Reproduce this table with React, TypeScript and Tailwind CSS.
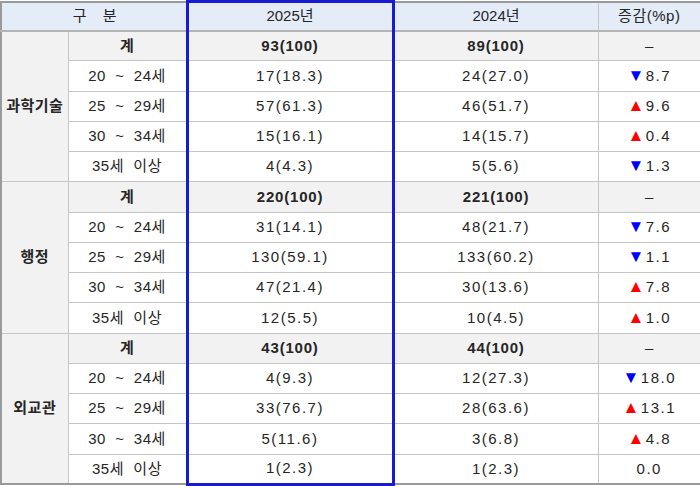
import React from "react";

type Row = { age: string; y25: string; y24: string; diff: string; dir?: "up" | "down" };

const groups: { name: string; total: [string, string]; rows: Row[] }[] = [
  {
    name: "과학기술",
    total: ["93(100)", "89(100)"],
    rows: [
      { age: "20  ~  24세", y25: "17(18.3)", y24: "24(27.0)", diff: "8.7", dir: "down" },
      { age: "25  ~  29세", y25: "57(61.3)", y24: "46(51.7)", diff: "9.6", dir: "up" },
      { age: "30  ~  34세", y25: "15(16.1)", y24: "14(15.7)", diff: "0.4", dir: "up" },
      { age: "35세  이상", y25: "4(4.3)", y24: "5(5.6)", diff: "1.3", dir: "down" },
    ],
  },
  {
    name: "행정",
    total: ["220(100)", "221(100)"],
    rows: [
      { age: "20  ~  24세", y25: "31(14.1)", y24: "48(21.7)", diff: "7.6", dir: "down" },
      { age: "25  ~  29세", y25: "130(59.1)", y24: "133(60.2)", diff: "1.1", dir: "down" },
      { age: "30  ~  34세", y25: "47(21.4)", y24: "30(13.6)", diff: "7.8", dir: "up" },
      { age: "35세  이상", y25: "12(5.5)", y24: "10(4.5)", diff: "1.0", dir: "up" },
    ],
  },
  {
    name: "외교관",
    total: ["43(100)", "44(100)"],
    rows: [
      { age: "20  ~  24세", y25: "4(9.3)", y24: "12(27.3)", diff: "18.0", dir: "down" },
      { age: "25  ~  29세", y25: "33(76.7)", y24: "28(63.6)", diff: "13.1", dir: "up" },
      { age: "30  ~  34세", y25: "5(11.6)", y24: "3(6.8)", diff: "4.8", dir: "up" },
      { age: "35세  이상", y25: "1(2.3)", y24: "1(2.3)", diff: "0.0" },
    ],
  },
];

const cell = "border border-[#c6c6c6] text-center align-middle p-0";
const blue = "border-l-[3px] border-r-[3px] border-l-[#1a1ad0] border-r-[#1a1ad0]";

function Diff({ value, dir }: { value: string; dir?: "up" | "down" }) {
  return (
    <span className="tracking-[1.5px]">
      {dir === "down" && <span className="text-[#0000ff] text-[17px] leading-none">▼</span>}
      {dir === "up" && <span className="text-[#ff0000] text-[17px] leading-none">▲</span>}
      {value}
    </span>
  );
}

export default function App() {
  return (
    <div className="w-[700px] h-[486px] bg-white overflow-hidden">
      <table
        className="border-collapse table-fixed w-[700px] text-[15px] text-[#262626] border-2 border-[#9a9a9a]"
        style={{ fontFamily: '"Liberation Sans", "Noto Sans CJK KR", sans-serif' }}
      >
        <colgroup>
          <col className="w-[67px]" />
          <col className="w-[119px]" />
          <col className="w-[206px]" />
          <col className="w-[205px]" />
          <col className="w-[103px]" />
        </colgroup>
        <thead>
          <tr className="h-[29px] bg-[#e3ecf7]">
            <th colSpan={2} className={`${cell} font-normal border-b-2 border-b-[#b4b4b4] tracking-[6px] pl-[8px]`}>
              구 분
            </th>
            <th className={`${cell} ${blue} border-t-[3px] border-t-[#1a1ad0] font-normal border-b-2 border-b-[#b4b4b4]`}>
              2025년
            </th>
            <th className={`${cell} font-normal border-b-2 border-b-[#b4b4b4]`}>2024년</th>
            <th className={`${cell} font-normal border-b-2 border-b-[#b4b4b4] tracking-[0.5px]`}>증감(%p)</th>
          </tr>
        </thead>
        <tbody>
          {groups.map((g, gi) => (
            <React.Fragment key={g.name}>
              <tr className="h-[30.25px] bg-[#f2f2f2]">
                <td rowSpan={5} className={`${cell} bg-[#f2f2f2] font-bold tracking-[0.5px]`}>
                  {g.name}
                </td>
                <td className={`${cell} font-bold`}>계</td>
                <td className={`${cell} ${blue} font-bold tracking-[0.8px]`}>{g.total[0]}</td>
                <td className={`${cell} font-bold tracking-[0.8px]`}>{g.total[1]}</td>
                <td className={cell}>–</td>
              </tr>
              {g.rows.map((r, ri) => {
                const last = gi === groups.length - 1 && ri === g.rows.length - 1;
                return (
                  <tr key={r.age} className="h-[30.25px] bg-white">
                    <td className={`${cell} whitespace-pre tracking-[0.5px]`}>{r.age}</td>
                    <td className={`${cell} ${blue} tracking-[1.5px] ${last ? "border-b-[3px] border-b-[#1a1ad0]" : ""}`}>
                      {r.y25}
                    </td>
                    <td className={`${cell} tracking-[1.5px]`}>{r.y24}</td>
                    <td className={cell}>
                      <Diff value={r.diff} dir={r.dir} />
                    </td>
                  </tr>
                );
              })}
            </React.Fragment>
          ))}
        </tbody>
      </table>
    </div>
  );
}
